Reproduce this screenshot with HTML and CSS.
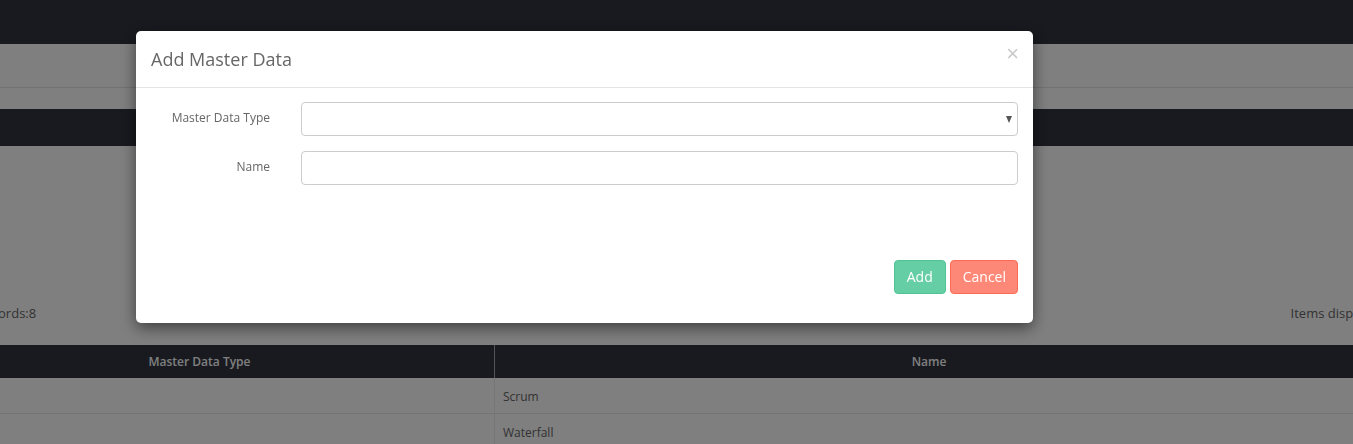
FILE: index.html
```html
<!DOCTYPE html>
<html>
<head>
<meta charset="utf-8">
<link rel="stylesheet" href="styles.css">
</head>
<body>
<div class="page">
  <div class="topbar"></div>
  <div class="subbar"></div>
  <div class="subgap"></div>
  <div class="darkbar"></div>
  <div class="content">
    <div class="info">
      <span class="total">Total Records:8</span>
      <span class="items">Items displayed: 1 - 8</span>
    </div>
    <div class="table">
      <div class="thead">
        <div class="th th-type">Master Data Type</div>
        <div class="th th-name">Name</div>
      </div>
      <div class="tr">
        <div class="td td-type"></div>
        <div class="td td-name">Scrum</div>
      </div>
      <div class="tr">
        <div class="td td-type"></div>
        <div class="td td-name">Waterfall</div>
      </div>
    </div>
  </div>
</div>
<div class="backdrop"></div>
<div class="modal">
  <div class="modal-header">
    <h4 class="modal-title">Add Master Data</h4>
    <span class="close">&times;</span>
  </div>
  <div class="modal-body">
    <div class="form-row">
      <label class="form-label">Master Data Type</label>
      <div class="select"><span class="caret"></span></div>
    </div>
    <div class="form-row">
      <label class="form-label">Name</label>
      <div class="input"></div>
    </div>
  </div>
  <div class="modal-footer">
    <button class="btn btn-add">Add</button>
    <button class="btn btn-cancel">Cancel</button>
  </div>
</div>
</body>
</html>
```
FILE: styles.css
```css
html, body {
  margin: 0;
  padding: 0;
  height: 100%;
  overflow: hidden;
}
body {
  font-family: "Open Sans", "Liberation Sans", sans-serif;
  background: #ffffff;
  color: #666;
}
.page {
  width: 1353px;
}
.topbar {
  height: 44px;
  background: #30343e;
}
.subbar {
  height: 43px;
  border-bottom: 1px solid #e4e4e4;
  background: #fff;
}
.subgap {
  height: 21px;
}
.darkbar {
  height: 37px;
  background: #30343e;
}
.content {
  padding-top: 155px;
}
.info {
  display: flex;
  justify-content: space-between;
  height: 44px;
  font-size: 13px;
  line-height: 24px;
  color: #666;
  margin-left: -57px;
  margin-right: -65px;
}
.table {
  margin-left: -95px;
  width: 1458px;
  font-size: 12px;
}
.thead {
  display: flex;
  height: 33px;
  background: #30343e;
  color: #fff;
  font-weight: 600;
}
.th {
  display: flex;
  align-items: center;
  justify-content: center;
}
.th-type {
  width: 589px;
  border-right: 1px solid #a9abaf;
}
.th-name {
  flex: 1;
}
.tr {
  display: flex;
  height: 35px;
  border-bottom: 1px solid #e8e8e8;
  color: #666;
}
.td {
  display: flex;
  align-items: center;
}
.td-type {
  width: 589px;
  border-right: 1px solid #ececec;
}
.td-name {
  flex: 1;
  padding-left: 8px;
  padding-top: 1px;
}
.backdrop {
  position: fixed;
  inset: 0;
  background: rgba(0, 0, 0, 0.5);
}
.modal {
  position: fixed;
  left: 136px;
  top: 31px;
  width: 897px;
  background: #fff;
  border-radius: 5px;
  box-shadow: 0 5px 15px rgba(0, 0, 0, 0.5);
}
.modal-header {
  display: flex;
  justify-content: space-between;
  align-items: center;
  padding: 15px;
  height: 26px;
  border-bottom: 1px solid #e5e5e5;
}
.modal-title {
  margin: 0;
  font-size: 18px;
  font-weight: 400;
  line-height: 26px;
  color: #666;
}
.close {
  font-size: 22px;
  line-height: 22px;
  color: #c9c9c9;
  font-family: "Liberation Sans", sans-serif;
  margin-top: -10px;
  margin-right: -1px;
}
.modal-body {
  padding: 14px 15px 15px;
  display: flex;
  flex-direction: column;
  gap: 15px;
}
.form-row {
  display: flex;
  align-items: center;
}
.form-label {
  width: 119px;
  padding-right: 31px;
  padding-bottom: 4px;
  text-align: right;
  font-size: 12px;
  color: #666;
}
.select, .input {
  flex: 1;
  height: 32px;
  border: 1px solid #cccccc;
  border-radius: 4px;
  position: relative;
}
.caret {
  position: absolute;
  right: 5px;
  top: 13px;
  width: 0;
  height: 0;
  border-left: 3px solid transparent;
  border-right: 3px solid transparent;
  border-top: 7px solid #555;
}
.modal-footer {
  display: flex;
  justify-content: flex-end;
  gap: 4px;
  padding: 60px 15px 29px;
}
.btn {
  font-family: "Open Sans", "Liberation Sans", sans-serif;
  font-size: 14px;
  line-height: 20px;
  padding: 6px 12px;
  color: #fff;
  border-radius: 4px;
  border: 1px solid;
}
.btn-add {
  background: #66cea5;
  border-color: #4fc596;
}
.btn-cancel {
  background: #fe8877;
  border-color: #fb6a55;
  padding: 6px 11px 6px 12px;
}
```
